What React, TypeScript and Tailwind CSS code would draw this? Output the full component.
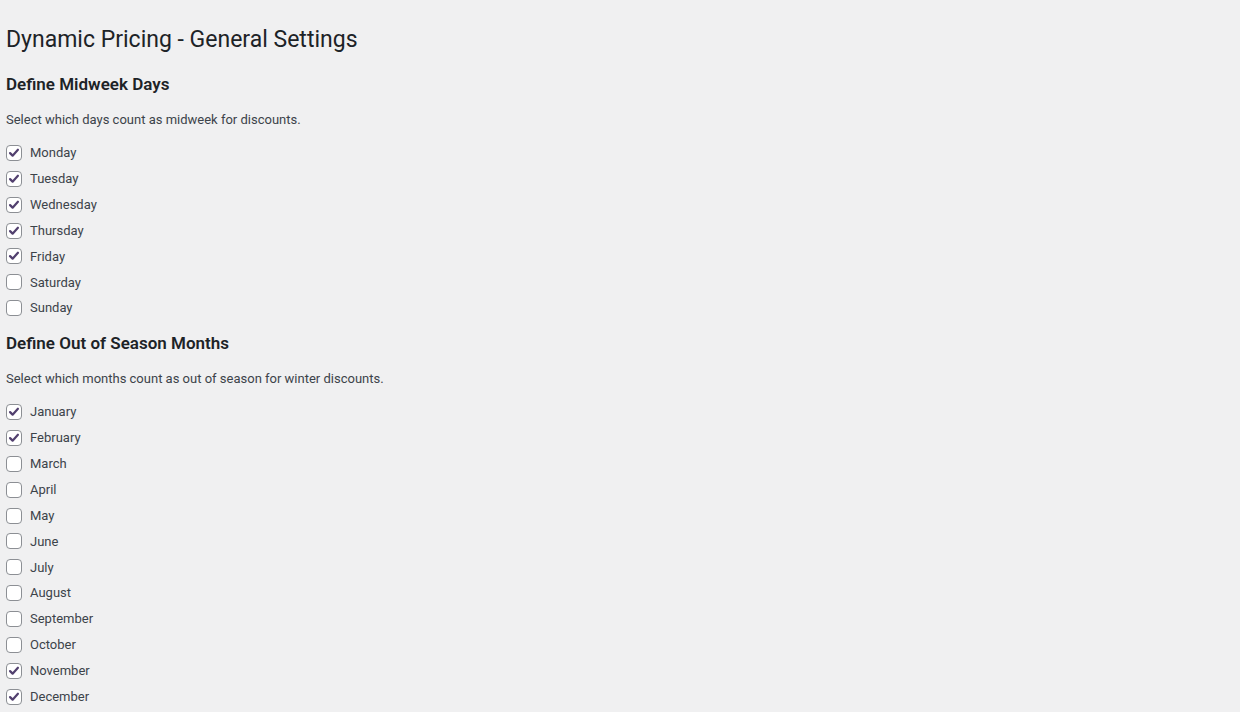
import React, { useState } from 'react';

const DAYS = ['Monday', 'Tuesday', 'Wednesday', 'Thursday', 'Friday', 'Saturday', 'Sunday'];
const MONTHS = [
  'January', 'February', 'March', 'April', 'May', 'June',
  'July', 'August', 'September', 'October', 'November', 'December',
];

const CheckRow: React.FC<{ label: string; checked: boolean; onToggle: () => void }> = ({ label, checked, onToggle }) => (
  <label className="flex items-center h-[25.88px] cursor-pointer select-none">
    <span
      onClick={onToggle}
      className="w-4 h-4 rounded-[4px] border border-[#8c8f94] bg-white flex items-center justify-center shrink-0"
    >
      {checked && (
        <svg width="14" height="14" viewBox="0 0 20 20">
          <path d="M4.4 10.2 L8 13.8 L15.6 5.4" fill="none" stroke="#52406f" strokeWidth="3.2" strokeLinecap="round" strokeLinejoin="round" />
        </svg>
      )}
    </span>
    <span className="ml-2 text-[13px] text-[#3c434a]">{label}</span>
  </label>
);

const Section: React.FC<{ title: string; desc: string; items: string[]; initial: string[]; first?: boolean }> = ({ title, desc, items, initial, first }) => {
  const [checked, setChecked] = useState<Record<string, boolean>>(
    Object.fromEntries(items.map((i) => [i, initial.includes(i)]))
  );
  const toggle = (k: string) => setChecked((prev) => ({ ...prev, [k]: !prev[k] }));

  return (
    <div className={first ? 'mt-[18px]' : 'mt-[11px]'}>
      <h2 className="text-[17px] leading-[22px] font-semibold text-[#1d2327]">{title}</h2>
      <p className="mt-[16px] text-[13px] leading-[18px] text-[#3c434a]">{desc}</p>
      <div className="mt-[11px] flex flex-col">
        {items.map((i) => (
          <CheckRow key={i} label={i} checked={checked[i]} onToggle={() => toggle(i)} />
        ))}
      </div>
    </div>
  );
};

export default function App() {
  return (
    <div
      className="min-h-screen bg-[#f0f0f1] pl-[6px] pt-[25px]"
      style={{ fontFamily: '"Segoe UI", Roboto, "Noto Sans", sans-serif' }}
    >
      <h1 className="text-[23px] leading-[30px] font-normal text-[#1d2327]">Dynamic Pricing - General Settings</h1>
      <Section
        first
        title="Define Midweek Days"
        desc="Select which days count as midweek for discounts."
        items={DAYS}
        initial={['Monday', 'Tuesday', 'Wednesday', 'Thursday', 'Friday']}
      />
      <Section
        title="Define Out of Season Months"
        desc="Select which months count as out of season for winter discounts."
        items={MONTHS}
        initial={['January', 'February', 'November', 'December']}
      />
    </div>
  );
}
